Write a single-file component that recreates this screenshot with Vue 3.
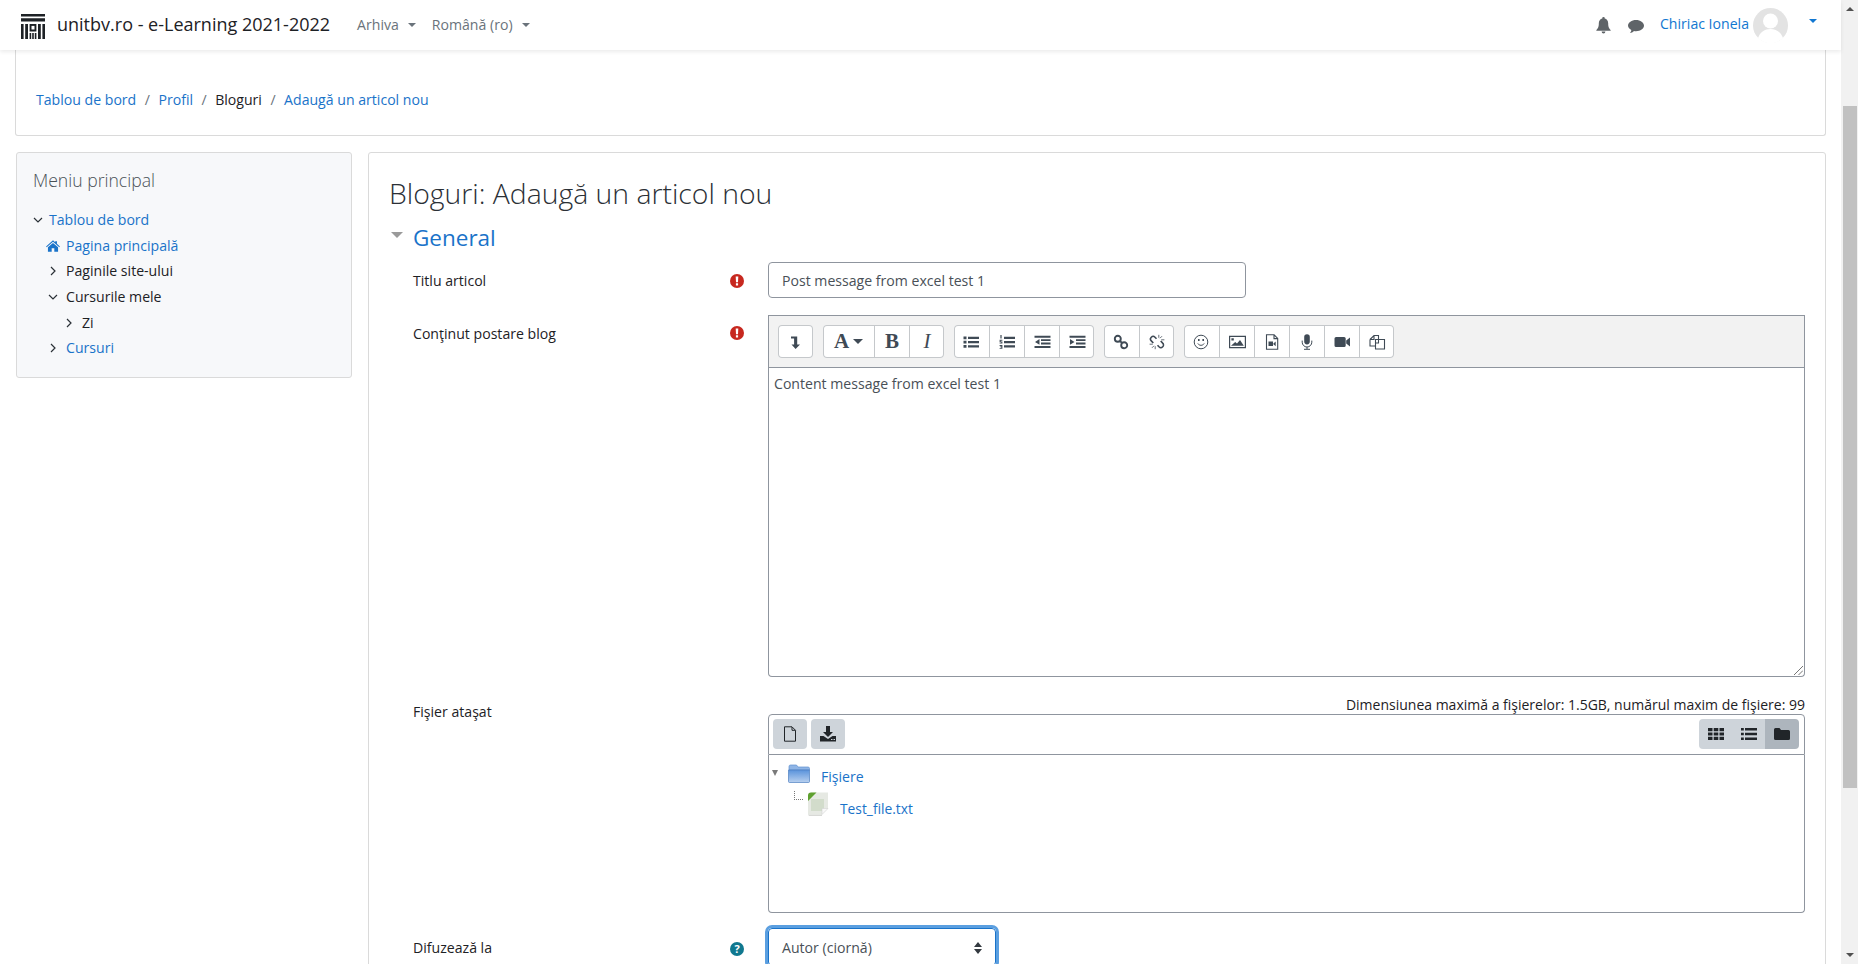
<script setup>
const groups = [
  [{ w: 35, p: [{ d: 'M4 2.500h6.200v8H13L8.600 15 4.500 10.500h2.600V4.500H4z' }] }],
  [
    { w: 51, t: 'A', caret: true },
    { w: 35, t: 'B', cls: 'bold' },
    { w: 35, t: 'I', cls: 'ital' }
  ],
  [
    { w: 35, p: [{ d: 'M.5 2.500h3v2.800h-3zM.5 6.800h3v2.800h-3zM.5 11h3v2.800h-3zM5 2.800h11v2.200H5zM5 7.100h11v2.200H5zM5 11.300h11v2.200H5z' }] },
    { w: 35, p: [{ d: 'M1.400 1h1.200v3.600H1.400zM.6 5.800h2.800v.9H1.700v.8h1.700v2.100H.6v-.9h1.700v-.5H.6zM.6 11h2.800v3.800H.6v-.9h1.700v-.6H.9v-.8h1.400v-.6H.6zM5 2.800h11v2.200H5zM5 7.100h11v2.200H5zM5 11.300h11v2.200H5z' }] },
    { w: 35, p: [{ d: 'M.5 1.800h16v2H.5zM7 5.200h9.500v1.900H7zM7 8.500h9.500v1.900H7zM.5 12h16v2H.5zM5.500 5v5.800L1 7.900z' }] },
    { w: 35, p: [{ d: 'M.5 1.800h16v2H.5zM7 5.200h9.500v1.900H7zM7 8.500h9.500v1.900H7zM.5 12h16v2H.5zM1 5v5.800l4.500-2.900z' }] }
  ],
  [
    { w: 35, p: [{ d: 'M1.800 4.800a3 3 0 1 0 6 0 3 3 0 1 0-6 0zM8.200 11.200a3 3 0 1 0 6 0 3 3 0 1 0-6 0zM6.500 6.500l3.200 3.200', s: 1.900 }] },
    { w: 35, p: [{ d: 'M7.500 4.800 6 3.200a2.600 2.600 0 0 0-3.700 3.700L4.300 9M8.500 11.200 10 12.800a2.600 2.600 0 0 0 3.700-3.700L11.700 7', s: 1.600 }, { d: 'M9.800.8v3M13 2.200 11 4.200M12.200 5.800h3.200M.6 10.200h3.200M3 13.800l2-2M6.200 12.200v3', s: .8 }] }
  ],
  [
    { w: 35, p: [{ d: 'M8 1.200a6.800 6.800 0 1 0 0 13.600A6.800 6.800 0 0 0 8 1.200z', s: 1 }, { d: 'M4.800 9.500c1.600 2.400 4.800 2.400 6.400 0', s: 1 }, { d: 'M5 5h1.600v2H5zM9.400 5H11v2H9.400z' }] },
    { w: 35, p: [{ d: 'M.6 2.300h15.800v11.400H.6z', s: 1.200 }, { d: 'M2 11.800 6.200 8l1.800 1.600 3-3.600 3.800 5.800zM2.400 4.200h2.400v2.400H2.400z' }] },
    { w: 35, p: [{ d: 'M2.500.8h7.600l3.600 3.600v10.800H2.500zM10 1v3.600h3.600', s: 1.100 }, { d: 'M4.500 7.500h4.500v4.500H4.500zM9.400 9.400l2.300-2v4.800l-2.300-2z' }] },
    { w: 35, p: [{ d: 'M5.200 3a2.800 2.800 0 0 1 5.600 0v4.600a2.800 2.800 0 0 1-5.600 0z' }, { d: 'M3.200 6.600v1.600a4.800 4.800 0 0 0 9.600 0V6.600M8 13v2M5 15.300h6', s: 1 }] },
    { w: 35, p: [{ d: 'M.5 4.600A1.600 1.600 0 0 1 2.100 3h8a1.600 1.600 0 0 1 1.600 1.600v6.800a1.600 1.600 0 0 1-1.600 1.600h-8A1.600 1.600 0 0 1 .5 11.400zM12.200 6.600 16 3.400v9.200l-3.800-3.200z' }] },
    { w: 35, p: [{ d: 'M1 5.500 5 1.500h4.500V5M1 5.500h4v-4M1 5.500V12h5M6.500 5.500h9v9.500h-9zM9.500 5.500V9H6.500', s: 1.100 }] }
  ]
]
const menu = [
  { t: 'Tablou de bord', link: true, ind: 'l0', icon: 'down' },
  { t: 'Pagina principală', link: true, ind: 'l1', icon: 'home' },
  { t: 'Paginile site-ului', ind: 'l1', icon: 'right' },
  { t: 'Cursurile mele', ind: 'l1', icon: 'down' },
  { t: 'Zi', ind: 'l2', icon: 'right' },
  { t: 'Cursuri', link: true, ind: 'l1', icon: 'right' }
]
</script>

<template>
  <div class="screen">
    <div class="page">
      <header class="navbar">
        <svg class="logo" viewBox="0 0 24 25" aria-hidden="true">
          <path d="M0 0h24v2.600H0zM0 4.200h24v3.300H0zM0 10h2.600v15H0zM4.200 10h2.800v15H4.200zM8.600 10h6.800v7.600H8.600zM8.600 19h1.600v6H8.600zM11.200 19h1.600v6h-1.600zM13.800 19h1.600v6h-1.600zM17 10h2.800v15H17zM21.400 10H24v15h-2.600z" />
          <path d="M10.500 11.900h3v3.600h-3z" fill="#fff" />
        </svg>
        <span class="brand">unitbv.ro - e-Learning 2021-2022</span>
        <span class="navlink first">Arhiva<i class="caret"></i></span>
        <span class="navlink second">Română ‎(ro)‎<i class="caret"></i></span>
        <span class="spacer"></span>
        <svg class="bell" viewBox="0 0 16 18"><path d="M8 0a1.300 1.300 0 0 1 1.300 1.500C11.600 2 13 4 13 6.500c0 4.500 1 5.500 2.600 7.200.3.400 0 1-.5 1H.9c-.5 0-.8-.6-.5-1C2 12 3 11 3 6.500 3 4 4.400 2 6.700 1.500A1.300 1.300 0 0 1 8 0zM6 15.500h4a2 2 0 0 1-4 0z" /></svg>
        <svg class="chat" viewBox="0 0 16 13"><path d="M8 0c4.400 0 8 2.500 8 5.600s-3.600 5.600-8 5.600c-.7 0-1.400-.1-2-.2C5 12 3.400 13 1.800 13c1-.8 1.500-2 1.500-3C1.300 9 0 7.400 0 5.600 0 2.500 3.600 0 8 0z" /></svg>
        <span class="username">Chiriac Ionela</span>
        <svg class="avatar" viewBox="0 0 35 35">
          <circle cx="17.500" cy="17.500" r="17.500" fill="#e3e3e3" />
          <circle cx="17.500" cy="13" r="7.500" fill="#fff" />
          <path d="M5 30c2-6 7-9 12.500-9S28 24 30 30a17.500 17.500 0 0 1-25 0z" fill="#fff" />
        </svg>
        <i class="caret blue"></i>
      </header>

      <div class="content">
        <div class="crumbs">
          <a class="lnk">Tablou de bord</a><span class="sep">/</span>
          <a class="lnk">Profil</a><span class="sep">/</span>
          <span>Bloguri</span><span class="sep">/</span>
          <a class="lnk">Adaugă un articol nou</a>
        </div>

        <div class="columns">
          <aside class="side">
            <h5 class="side-title">Meniu principal</h5>
            <ul class="tree">
              <li v-for="m in menu" :key="m.t" :class="['node', m.ind]">
                <svg v-if="m.icon === 'down'" class="chev" viewBox="0 0 10 10"><path d="M1 3l4 4 4-4" /></svg>
                <svg v-else-if="m.icon === 'right'" class="chev" viewBox="0 0 10 10"><path d="M3 1l4 4-4 4" /></svg>
                <svg v-else class="home" viewBox="0 0 16 13"><path d="M8 0l2.500 2.200V1h2v3l3.400 3-.7.800L8 1.700 .8 7.800.1 7zM2.200 7.800 8 3l5.800 4.800V13H9.500V9h-3v4H2.200z" /></svg>
                <span :class="{ lnk: m.link }">{{ m.t }}</span>
              </li>
            </ul>
          </aside>

          <main class="main">
            <h2 class="title">Bloguri: Adaugă un articol nou</h2>
            <div class="legend"><i class="tri"></i><span>General</span></div>

            <div class="row row-title">
              <label class="lab">Titlu articol</label>
              <svg class="flag" viewBox="0 0 14 14"><circle cx="7" cy="7" r="7" fill="#c7281f" /><path d="M5.700 2.500h2.600L8 8.200H6zM5.900 9.200h2.200v2.200H5.900z" fill="#fff" /></svg>
              <div class="input title-input">Post message from excel test 1</div>
            </div>

            <div class="row row-editor">
              <label class="lab">Conţinut postare blog</label>
              <svg class="flag" viewBox="0 0 14 14"><circle cx="7" cy="7" r="7" fill="#c7281f" /><path d="M5.700 2.500h2.600L8 8.200H6zM5.900 9.200h2.200v2.200H5.900z" fill="#fff" /></svg>
              <div class="editor">
                <div class="toolbar">
                  <div v-for="(g, gi) in groups" :key="gi" class="group">
                    <button v-for="(b, bi) in g" :key="bi" class="atto" :style="{ width: b.w + 'px' }">
                      <svg v-if="b.p" class="ai" viewBox="0 0 17 16">
                        <path v-for="(x, i) in b.p" :key="i" :d="x.d" :fill="x.s ? 'none' : '#3f4a55'" :stroke="x.s ? '#3f4a55' : 'none'" :stroke-width="x.s || 0" />
                      </svg>
                      <span v-else :class="['glyph', b.cls]">{{ b.t }}</span>
                      <i v-if="b.caret" class="caret dark"></i>
                    </button>
                  </div>
                </div>
                <div class="area">
                  <span>Content message from excel test 1</span>
                  <svg class="grip" viewBox="0 0 10 10"><path d="M0 10 10 0M5 10l5-5" /></svg>
                </div>
              </div>
            </div>

            <div class="limit">Dimensiunea maximă a fişierelor: 1.5GB, numărul maxim de fişiere: 99</div>

            <div class="row row-file">
              <label class="lab">Fişier ataşat</label>
              <span class="noflag"></span>
              <div class="fm">
                <div class="fm-bar">
                  <button class="fb"><svg viewBox="0 0 16 16"><path d="M2.500.8h7.500l3.500 3.500v10.900h-11zM10 1v3.300h3.300" fill="none" stroke="#212529" stroke-width="1" /></svg></button>
                  <button class="fb"><svg viewBox="0 0 16 16"><path d="M6 0h4v6h3L8 11 3 6h3zM0 10h3.500L8 13l4.500-3H16v5.500H0zM11 13v1h1.500v-1zM13.500 13v1H15v-1z" fill="#212529" /></svg></button>
                  <span class="spacer"></span>
                  <div class="views">
                    <button class="fb"><svg viewBox="0 0 16 16"><path d="M0 2h4.500v3.200H0zM5.700 2h4.600v3.200H5.700zM11.500 2H16v3.200h-4.500zM0 6.400h4.500v3.200H0zM5.700 6.400h4.600v3.200H5.700zM11.500 6.400H16v3.200h-4.500zM0 10.800h4.500V14H0zM5.700 10.800h4.600V14H5.700zM11.500 10.800H16V14h-4.500z" fill="#212529" /></svg></button>
                    <button class="fb"><svg viewBox="0 0 16 16"><path d="M0 2h2.800v2.400H0zM4 2h12v2.400H4zM0 6.800h2.800v2.400H0zM4 6.800h12v2.400H4zM0 11.600h2.800V14H0zM4 11.600h12V14H4z" fill="#212529" /></svg></button>
                    <button class="fb on"><svg viewBox="0 0 16 16"><path d="M0 3.500A1.500 1.500 0 0 1 1.500 2h4L7 4h7.500A1.500 1.500 0 0 1 16 5.500v7a1.500 1.500 0 0 1-1.500 1.500h-13A1.500 1.500 0 0 1 0 12.500z" fill="#212529" /></svg></button>
                  </div>
                </div>
                <div class="fm-body">
                  <div class="fold-row">
                    <i class="mini-tri"></i>
                    <svg class="folder" viewBox="0 0 22 19">
                      <defs><linearGradient id="fg" x1="0" y1="0" x2="0" y2="1"><stop offset="0" stop-color="#5a93dc" /><stop offset="1" stop-color="#b8d0ef" /></linearGradient></defs>
                      <path d="M1 2.500A1.500 1.500 0 0 1 2.500 1h6L10 3h10a1.500 1.500 0 0 1 1.500 1.500V6H1z" fill="#8fb5e6" stroke="#5f8fce" stroke-width=".7" />
                      <path d="M.5 6h21v11.500a1 1 0 0 1-1 1h-19a1 1 0 0 1-1-1z" fill="url(#fg)" stroke="#4e7fc0" stroke-width=".7" />
                    </svg>
                    <span class="lnk">Fişiere</span>
                  </div>
                  <div class="file-row">
                    <i class="dots"></i>
                    <svg class="fileic" viewBox="0 0 22 24">
                      <path d="M4 .5h17v16l-6 6H1V3.500z" fill="#e6e9e3" />
                      <path d="M4 7h13v12H4z" fill="#d2dccb" />
                      <path d="M15 22.500l6-6h-6z" fill="#f8f8f8" stroke="#cfcfcf" stroke-width=".5" />
                      <path d="M1 9 9.500 .5H4A3 3 0 0 0 1 3.500z" fill="#5fa02f" />
                      <path d="M1 22.500h14V24H2z" fill="#d8d9d6" />
                    </svg>
                    <span class="lnk">Test_file.txt</span>
                  </div>
                </div>
              </div>
            </div>

            <div class="row row-select">
              <label class="lab">Difuzează la</label>
              <svg class="flag" viewBox="0 0 14 14"><circle cx="7" cy="7" r="7" fill="#10788f" /><text x="7" y="11" text-anchor="middle" class="q">?</text></svg>
              <div class="select">
                <span>Autor (ciornă)</span>
                <svg class="updown" viewBox="0 0 8 12"><path d="M4 0l4 5H0zM4 12 0 7h8z" /></svg>
              </div>
            </div>
          </main>
        </div>
      </div>
    </div>

    <div class="scrollbar">
      <i class="arr up"></i>
      <div class="track"><div class="thumb"></div></div>
      <i class="arr down"></i>
    </div>
  </div>
</template>

<style>
html, body { margin: 0; overflow: hidden; }
</style>

<style scoped>
.screen {
  display: flex;
  height: 964px;
  overflow: hidden;
  background: #fff;
  color: #1d2125;
  font-family: "Open Sans", "Noto Sans", sans-serif;
  font-size: 14.100px;
  line-height: 20px;
}
.page { flex: 1; min-width: 0; display: flex; flex-direction: column; }
.navbar {
  height: 50px;
  flex: none;
  display: flex;
  align-items: center;
  background: #fff;
  box-shadow: 0 2px 4px rgba(0, 0, 0, .08);
  position: relative;
  z-index: 2;
  padding-left: 21px;
}
.logo { width: 24px; height: 25px; fill: #1d2125; margin-top: 2px; }
.brand { margin-left: 12px; font-size: 18px; white-space: nowrap; margin-top: -3px; }
.navlink { color: #6a737b; white-space: nowrap; display: flex; align-items: center; }
.navlink.first { margin-left: 27px; }
.navlink.second { margin-left: 16px; }
.caret {
  display: inline-block;
  width: 0; height: 0;
  border-left: 4.500px solid transparent;
  border-right: 4.500px solid transparent;
  border-top: 4.500px solid #6a737b;
  margin-left: 9px;
}
.caret.blue { border-top-color: #1177d1; margin-left: 21px; margin-right: 24px; margin-top: -9px; }
.caret.dark { border-top-color: #3f4a55; margin-left: 4px; border-left-width: 5px; border-right-width: 5px; border-top-width: 5px; }
.spacer { flex: 1; }
.bell { width: 15px; height: 17px; fill: #5f6468; margin-top: 1px; }
.chat { width: 16px; height: 13px; fill: #5f6468; margin-left: 17px; margin-top: 2px; }
.username { color: #1177d1; margin-left: 16px; white-space: nowrap; margin-top: -3px; }
.avatar { width: 35px; height: 35px; margin-left: 4px; margin-top: 1px; }
.lnk { color: #1a73c9; }
.content { flex: 1; padding: 0 15px; min-height: 0; }
.crumbs {
  height: 86px;
  box-sizing: border-box;
  border: 1px solid #dadada;
  border-top: 0;
  border-radius: 0 0 3px 3px;
  padding: 14px 20px 0;
  display: flex;
  align-items: center;
}
.sep { color: #6a737b; margin: 0 8.500px; }
.columns { display: flex; gap: 16px; margin-top: 16px; align-items: flex-start; }
.side {
  width: 336px;
  height: 226px;
  box-sizing: border-box;
  margin-left: 1px;
  background: #f7f8fa;
  border: 1px solid #dadada;
  border-radius: 3px;
  padding: 15px 16px;
  flex: none;
}
.side-title { margin: 0; font-size: 17.600px; font-weight: 300; line-height: 24px; color: #4a5157; }
.tree { list-style: none; margin: 15.500px 0 0; padding: 0; }
.node { height: 25.600px; display: flex; align-items: center; white-space: nowrap; }
.l0 .chev { margin-right: 6px; }
.l1 { padding-left: 15px; }
.l1 .chev { margin-right: 8px; }
.l2 { padding-left: 31px; }
.l2 .chev { margin-right: 8px; }
.chev { width: 10px; height: 10px; fill: none; stroke: #2b3137; stroke-width: 1.200; flex: none; }
.home { width: 14px; height: 12px; fill: #1a73c9; margin: 0 6px 0 -2px; flex: none; }
.main {
  flex: 1;
  min-width: 0;
  height: 900px;
  box-sizing: border-box;
  border: 1px solid #dadada;
  border-radius: 3px;
  padding: 23px 20px 0 21px;
}
.title { margin: 0; height: 34px; font-size: 28.350px; line-height: 34px; font-weight: 300; color: #2b3036; white-space: nowrap; margin-left: -1px; }
.legend { margin-top: 13px; height: 30px; display: flex; align-items: center; color: #1a73c9; font-size: 22.500px; }
.tri { width: 0; height: 0; border-left: 6px solid transparent; border-right: 6px solid transparent; border-top: 6px solid #9a9a9a; margin: -6px 10px 0 1px; }
.row { display: grid; grid-template-columns: 317px 38px 1fr; padding-left: 23px; }
.row-title { margin-top: 9px; height: 36px; }
.row-editor { margin-top: 17px; }
.row-file { margin-top: 0; }
.row-select { margin-top: 15px; }
.lab { line-height: 38px; white-space: nowrap; }
.row-file .lab { margin-top: -20px; line-height: 36px; }
.row-select .lab { line-height: 40px; }
.flag { width: 14px; height: 14px; margin-top: 11px; }
.row-title .flag { margin-top: 12px; }
.row-select .flag { margin-top: 14px; }
.q { font: 700 11px "Open Sans", sans-serif; fill: #fff; }
.input {
  width: 478px;
  height: 36px;
  box-sizing: border-box;
  border: 1px solid #8f959e;
  border-radius: 4px;
  padding: 0 13px;
  line-height: 36px;
  color: #495057;
}
.editor { display: flex; flex-direction: column; height: 362px; min-width: 0; }
.toolbar {
  height: 53px;
  box-sizing: border-box;
  background: #f2f2f2;
  border: 1px solid #8f959e;
  display: flex;
  gap: 10px;
  padding: 9px 9px 0;
}
.group { display: flex; height: 33px; border-radius: 4px; background: #fff; overflow: hidden; box-shadow: inset 0 0 0 1px #c5c8cb; }
.atto {
  border: 0;
  border-left: 1px solid #c5c8cb;
  background: transparent;
  padding: 0;
  margin: 0;
  box-sizing: border-box;
  display: flex;
  align-items: center;
  justify-content: center;
  height: 33px;
}
.atto:first-child { border-left: 0; }
.ai { width: 17px; height: 16px; }
.glyph { font-family: "Liberation Serif", serif; font-size: 21px; font-weight: 700; color: #3f4a55; line-height: 1; }
.glyph.ital { font-style: italic; font-weight: 400; }
.area {
  flex: 1;
  position: relative;
  border: 1px solid #8f959e;
  border-top: 0;
  border-radius: 0 0 4px 4px;
  padding: 6px 5px;
  color: #495057;
}
.grip { position: absolute; right: 1px; bottom: 1px; width: 9px; height: 9px; stroke: #666; stroke-width: 1; fill: none; }
.limit { margin-top: 17px; height: 20px; line-height: 22px; text-align: right; font-size: 14px; }
.noflag { display: block; }
.fm { display: flex; flex-direction: column; height: 199px; min-width: 0; }
.fm-bar {
  height: 41px;
  box-sizing: border-box;
  border: 1px solid #8f959e;
  border-radius: 4px 4px 0 0;
  padding: 4px;
  display: flex;
  gap: 4px;
}
.fb {
  width: 34px;
  height: 30px;
  border: 0;
  padding: 0;
  background: #ced4da;
  border-radius: 4px;
  display: flex;
  align-items: center;
  justify-content: center;
}
.fb svg { width: 16px; height: 16px; }
.views { display: flex; margin-right: 1px; }
.views .fb { border-radius: 0; width: 33px; }
.views .fb:first-child { border-radius: 4px 0 0 4px; }
.views .fb:last-child { border-radius: 0 4px 4px 0; width: 34px; }
.views .on { background: #adb5bd; }
.fm-body {
  flex: 1;
  border: 1px solid #8f959e;
  border-top: 0;
  border-radius: 0 0 4px 4px;
  padding: 9px 3px;
  position: relative;
}
.fold-row { display: flex; align-items: center; height: 22px; }
.mini-tri { width: 0; height: 0; border-left: 3.500px solid transparent; border-right: 3.500px solid transparent; border-top: 6px solid #7a7a7a; margin-top: -5px; }
.folder { width: 22px; height: 19px; margin: -3px 11px 0 10px; }
.fold-row .lnk { margin-top: 4px; }
.file-row { display: flex; align-items: center; height: 26px; margin-top: 5px; padding-left: 22px; }
.dots { width: 9px; height: 9px; border-left: 1px dotted #777; border-bottom: 1px dotted #777; margin-top: -17px; box-sizing: border-box; }
.fileic { width: 22px; height: 24px; margin: 0 11px 0 4px; }
.file-row .lnk { margin-top: 10px; font-size: 13.800px; }
.select {
  width: 228px;
  height: 38px;
  box-sizing: border-box;
  border: 1px solid #1a73c9;
  outline: 3px solid #5b9fe0;
  border-radius: 4px;
  padding: 2px 13px 0 13px;
  display: flex;
  align-items: center;
  justify-content: space-between;
  color: #495057;
}
.updown { width: 8px; height: 12px; fill: #343a40; }
.scrollbar { width: 17px; flex: none; background: #f1f1f1; display: flex; flex-direction: column; align-items: center; }
.track { flex: 1; width: 100%; padding-top: 95px; box-sizing: border-box; }
.thumb { width: 14px; height: 682px; margin-left: 2px; background: #c1c1c1; }
.arr { width: 0; height: 0; border-left: 4px solid transparent; border-right: 4px solid transparent; flex: none; }
.arr.up { border-bottom: 4px solid #505050; margin-top: 7px; }
.arr.down { border-top: 4px solid #505050; margin-bottom: 7px; }
</style>
